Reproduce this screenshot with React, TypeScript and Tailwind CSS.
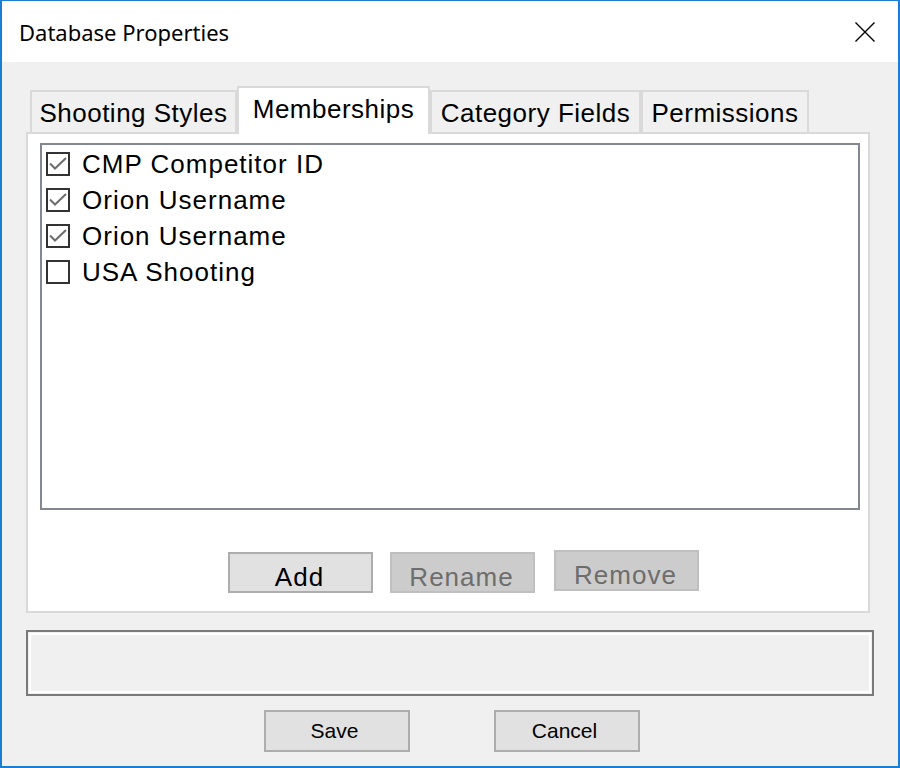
import { FC } from "react";

type Member = { label: string; checked: boolean };

const members: Member[] = [
  { label: "CMP Competitor ID", checked: true },
  { label: "Orion Username", checked: true },
  { label: "Orion Username", checked: true },
  { label: "USA Shooting", checked: false },
];

const tabs = [
  { label: "Shooting Styles", width: "w-[207px]" },
  { label: "Memberships", width: "w-[193px]" },
  { label: "Category Fields", width: "w-[211px]" },
  { label: "Permissions", width: "w-[168px]" },
];

const CheckBox: FC<{ checked: boolean }> = ({ checked }) => (
  <div className="w-[24px] h-[24px] border-2 border-[#333333] bg-white flex items-center justify-center">
    {checked && (
      <svg width="20" height="20" viewBox="0 0 20 20">
        <path d="M2 9.5 L7 14.5 L18 4" fill="none" stroke="#6d6d6d" strokeWidth="2" />
      </svg>
    )}
  </div>
);

const App: FC = () => {
  const active = 1;

  return (
    <div className="w-[900px] h-[768px] border-2 border-t-[1px] border-[#1a7fd4] bg-[#f0f0f0] flex flex-col font-['Liberation_Sans',Arial,sans-serif] text-black">
      {/* title bar */}
      <div className="h-[61px] bg-white flex items-center justify-between pl-[17px] pr-[23px]">
        <span className="text-[22px] font-['Noto_Sans',sans-serif] pt-[2px]">Database Properties</span>
        <svg width="20" height="20" viewBox="0 0 20 20">
          <path d="M0.5 0.5 L19.5 19.5 M19.5 0.5 L0.5 19.5" stroke="#000" strokeWidth="1.4" />
        </svg>
      </div>

      <div className="flex-1 flex flex-col pl-[24px] pr-[24px] pt-[24px] pb-[14px]">
        {/* tab strip */}
        <div className="flex items-end h-[46px] pl-[4px]">
          {tabs.map((t, i) =>
            i === active ? (
              <div
                key={t.label}
                className={`${t.width} h-[48px] -mb-[2px] relative z-10 bg-white border-2 border-b-0 border-[#d9d9d9] flex items-center justify-center text-[26px] tracking-[0.5px] pb-[4px]`}
              >
                {t.label}
              </div>
            ) : (
              <div
                key={t.label}
                className={`${t.width} h-[42px] border-2 border-b-0 border-[#d9d9d9] flex items-center justify-center text-[26px] tracking-[0.5px] pt-[2px]`}
              >
                {t.label}
              </div>
            )
          )}
        </div>

        {/* tab page */}
        <div className="w-[844px] bg-white border-2 border-[#d9d9d9] pt-[9px] pl-[12px] pr-[8px] pb-[18px] flex flex-col">
          <div className="h-[367px] border-2 border-[#828790] bg-white pt-[1px] pl-[4px]">
            {members.map((m, i) => (
              <div key={i} className="h-[36px] flex items-center gap-[12px]">
                <CheckBox checked={m.checked} />
                <span className="text-[26px] leading-none tracking-[1px]">{m.label}</span>
              </div>
            ))}
          </div>

          <div className="flex items-start mt-[40px] pl-[188px] h-[43px]">
            <button className="w-[145px] h-[41px] mt-[2px] border-2 border-[#adadad] bg-[#e1e1e1] text-[26px] tracking-[1px] pt-[4px] pr-[2px]">
              Add
            </button>
            <button className="w-[145px] h-[41px] mt-[2px] ml-[17px] border-2 border-[#bfbfbf] bg-[#cccccc] text-[26px] tracking-[1px] text-[#6d6d6d] pt-[4px] pr-[2px]">
              Rename
            </button>
            <button className="w-[145px] h-[41px] ml-[19px] border-2 border-[#bfbfbf] bg-[#cccccc] text-[26px] tracking-[1px] text-[#6d6d6d] pt-[4px] pr-[2px]">
              Remove
            </button>
          </div>
        </div>

        {/* status box */}
        <div className="mt-[17px] w-[848px] h-[66px] border-2 border-[#7a7a7a] p-[1px]">
          <div className="w-full h-full border-2 border-white" />
        </div>

        <div className="mt-[14px] flex justify-center gap-[84px] pl-[4px]">
          <button className="w-[146px] h-[42px] border-2 border-[#adadad] bg-[#e1e1e1] text-[21px] pr-[5px]">Save</button>
          <button className="w-[146px] h-[42px] border-2 border-[#adadad] bg-[#e1e1e1] text-[21px] pr-[5px]">Cancel</button>
        </div>
      </div>
    </div>
  );
};

export default App;
